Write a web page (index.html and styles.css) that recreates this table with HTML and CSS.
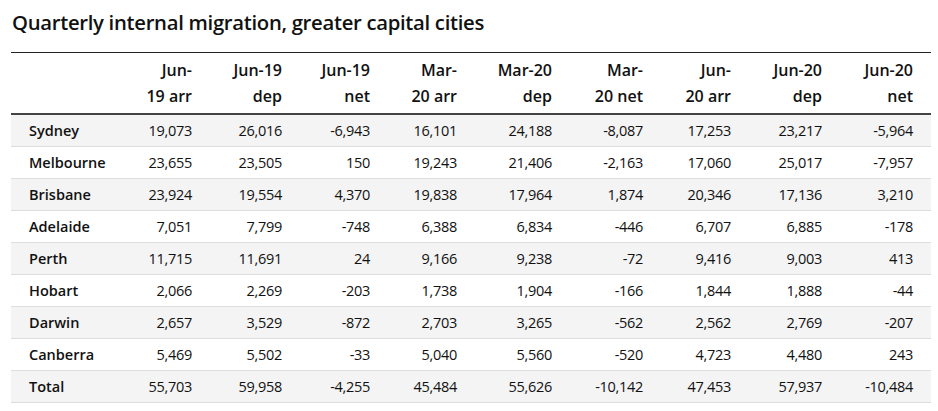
FILE: index.html
```html
<!DOCTYPE html>
<html>
<head>
<meta charset="utf-8">
<link rel="stylesheet" href="styles.css">
</head>
<body>
<h1 class="title">Quarterly internal migration, greater capital cities</h1>
<table class="data">
<colgroup>
<col class="c-name"><col class="c90"><col class="c90"><col class="c88"><col class="c87"><col class="c95"><col class="c91"><col class="c88"><col class="c91"><col class="c91">
</colgroup>
<thead>
<tr>
<th></th>
<th>Jun-<br>19 arr</th>
<th>Jun-19<br>dep</th>
<th>Jun-19<br>net</th>
<th>Mar-<br>20 arr</th>
<th>Mar-20<br>dep</th>
<th>Mar-<br>20 net</th>
<th>Jun-<br>20 arr</th>
<th>Jun-20<br>dep</th>
<th>Jun-20<br>net</th>
</tr>
</thead>
<tbody>
<tr><th>Sydney</th><td>19,073</td><td>26,016</td><td>-6,943</td><td>16,101</td><td>24,188</td><td>-8,087</td><td>17,253</td><td>23,217</td><td>-5,964</td></tr>
<tr><th>Melbourne</th><td>23,655</td><td>23,505</td><td>150</td><td>19,243</td><td>21,406</td><td>-2,163</td><td>17,060</td><td>25,017</td><td>-7,957</td></tr>
<tr><th>Brisbane</th><td>23,924</td><td>19,554</td><td>4,370</td><td>19,838</td><td>17,964</td><td>1,874</td><td>20,346</td><td>17,136</td><td>3,210</td></tr>
<tr><th>Adelaide</th><td>7,051</td><td>7,799</td><td>-748</td><td>6,388</td><td>6,834</td><td>-446</td><td>6,707</td><td>6,885</td><td>-178</td></tr>
<tr><th>Perth</th><td>11,715</td><td>11,691</td><td>24</td><td>9,166</td><td>9,238</td><td>-72</td><td>9,416</td><td>9,003</td><td>413</td></tr>
<tr><th>Hobart</th><td>2,066</td><td>2,269</td><td>-203</td><td>1,738</td><td>1,904</td><td>-166</td><td>1,844</td><td>1,888</td><td>-44</td></tr>
<tr><th>Darwin</th><td>2,657</td><td>3,529</td><td>-872</td><td>2,703</td><td>3,265</td><td>-562</td><td>2,562</td><td>2,769</td><td>-207</td></tr>
<tr><th>Canberra</th><td>5,469</td><td>5,502</td><td>-33</td><td>5,040</td><td>5,560</td><td>-520</td><td>4,723</td><td>4,480</td><td>243</td></tr>
<tr><th>Total</th><td>55,703</td><td>59,958</td><td>-4,255</td><td>45,484</td><td>55,626</td><td>-10,142</td><td>47,453</td><td>57,937</td><td>-10,484</td></tr>
</tbody>
</table>
</body>
</html>
```
FILE: styles.css
```css
html, body {
  margin: 0;
  padding: 0;
  background: #fff;
}
body {
  padding: 0 7px 0 11px;
  font-family: "Open Sans", "Noto Sans", sans-serif;
  color: #111;
}
.title {
  margin: 0;
  padding: 8px 0 0 1px;
  height: 52px;
  box-sizing: border-box;
  font-size: 20.3px;
  font-weight: 600;
  line-height: 28px;
  letter-spacing: -0.3px;
}
.data {
  width: 920px;
  table-layout: fixed;
  border-collapse: collapse;
  border-top: 1px solid #222;
  font-size: 14.5px;
}
.c-name { width: 109px; }
.c90 { width: 90px; }
.c88 { width: 88px; }
.c87 { width: 87px; }
.c95 { width: 95px; }
.c91 { width: 91px; }
.data thead th {
  text-align: right;
  font-size: 16px;
  font-weight: 600;
  line-height: 26px;
  padding: 4px 18px 4px 0;
  border-bottom: 2px solid #444;
  white-space: nowrap;
}
.data tbody th {
  text-align: left;
  font-weight: 600;
  padding: 0 0 0 18px;
  white-space: nowrap;
}
.data td {
  text-align: right;
  padding: 0 18px 0 0;
  letter-spacing: -0.3px;
}
.data tbody tr {
  height: 32px;
  border-bottom: 1px solid #ddd;
}
.data tbody tr:nth-child(odd) {
  background: #f4f4f4;
}
.data tbody th, .data td {
  line-height: 21px;
}
```
